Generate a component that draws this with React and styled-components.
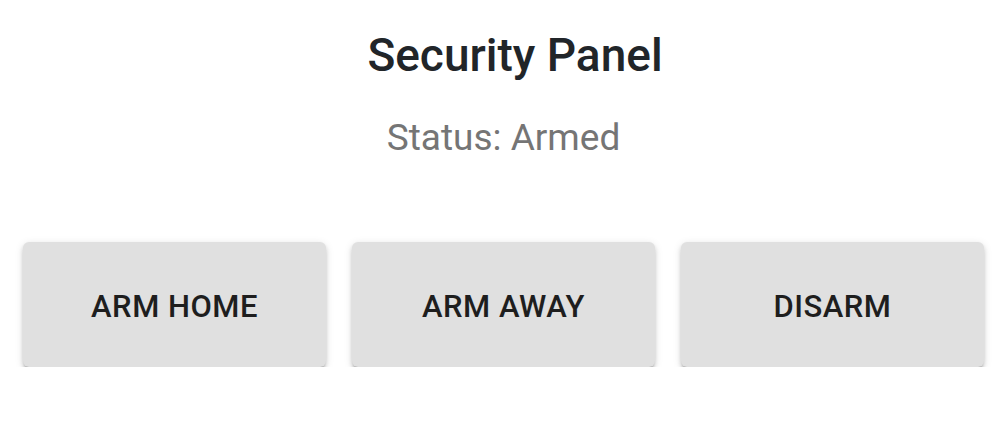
import styled, { createGlobalStyle } from "styled-components";

const GlobalStyle = createGlobalStyle`
  body {
    margin: 0;
    background: #ffffff;
    font-family: Roboto, "Liberation Sans", sans-serif;
  }
`;

const StyledPanel = styled.div`
  display: flex;
  flex-direction: column;
  align-items: center;
  padding-top: 31px;
`;

const StyledTitle = styled.h1`
  margin: 0 0 0 27px;
  font-size: 46px;
  line-height: 49px;
  font-weight: 500;
  color: #212529;
`;

const StyledStatus = styled.p`
  margin: 38px 0 0 4px;
  font-size: 37px;
  line-height: 40px;
  font-weight: 400;
  color: #757575;
`;

const StyledButtonRow = styled.div`
  display: grid;
  grid-template-columns: repeat(3, 303px);
  gap: 26px;
  margin-top: 84px;
  padding-left: 4px;
`;

const StyledButton = styled.button`
  height: 125px;
  padding-top: 4px;
  border: none;
  border-radius: 6px;
  background-color: #e0e0e0;
  color: #1e1e1e;
  font-family: Roboto, "Liberation Sans", sans-serif;
  font-size: 31px;
  font-weight: 500;
  letter-spacing: 0.5px;
  text-transform: uppercase;
  box-shadow: 0 4px 3px -2px rgba(0, 0, 0, 0.22), 0 3px 4px rgba(0, 0, 0, 0.14),
    0 2px 9px rgba(0, 0, 0, 0.12);
  cursor: pointer;
`;

const actions = ["Arm Home", "Arm Away", "Disarm"];

export default function App() {
  return (
    <>
      <GlobalStyle />
      <StyledPanel>
        <StyledTitle>Security Panel</StyledTitle>
        <StyledStatus>Status: Armed</StyledStatus>
        <StyledButtonRow>
          {actions.map((action) => (
            <StyledButton key={action}>{action}</StyledButton>
          ))}
        </StyledButtonRow>
      </StyledPanel>
    </>
  );
}
